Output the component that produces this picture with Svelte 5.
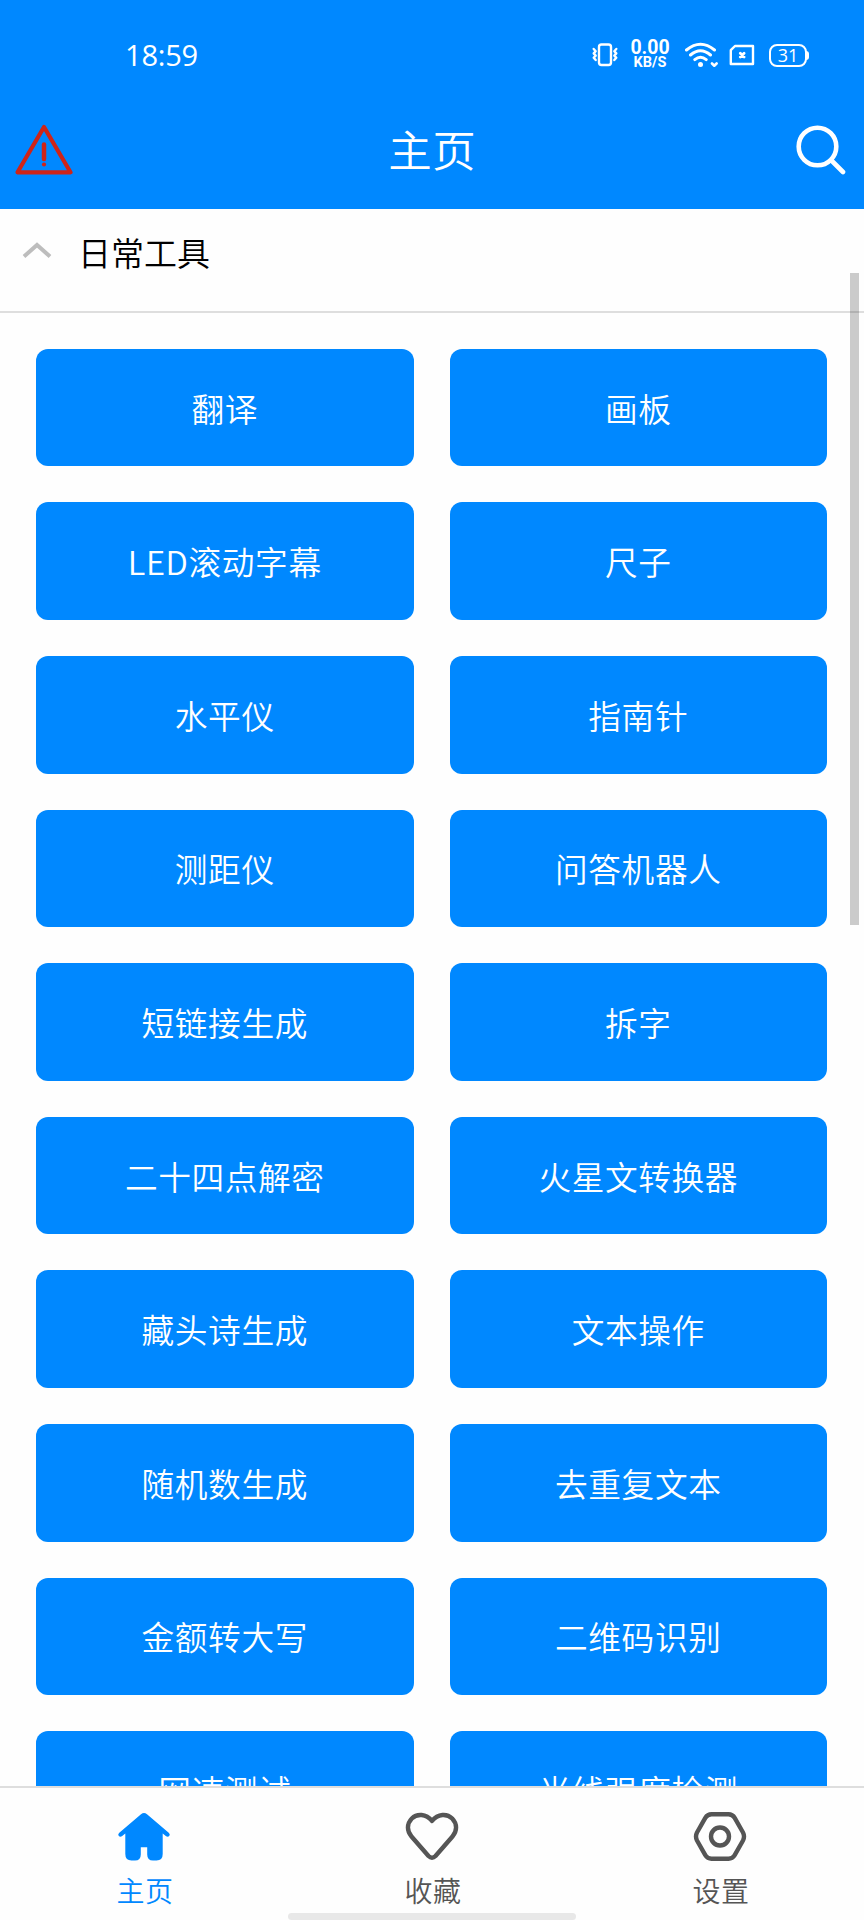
<script lang="ts">
  const tools = [
    '翻译', '画板',
    'LED滚动字幕', '尺子',
    '水平仪', '指南针',
    '测距仪', '问答机器人',
    '短链接生成', '拆字',
    '二十四点解密', '火星文转换器',
    '藏头诗生成', '文本操作',
    '随机数生成', '去重复文本',
    '金额转大写', '二维码识别',
    '网速测试', '光线强度检测',
  ];

  const tabs = [
    { id: 'home', label: '主页' },
    { id: 'favorites', label: '收藏' },
    { id: 'settings', label: '设置' },
  ];

  let open = $state(true);
  let active = $state('home');
</script>

<div class="screen">
  <header>
    <div class="status">
      <span class="time">18:59</span>
      <div class="indicators">
        <svg class="vibrate" width="26" height="24" viewBox="0 0 26 24">
          <rect x="7" y="1.500" width="12" height="20.500" rx="2.500" />
          <path d="M1.700 6l2 2.200-2 2.200 2 2.200-2 2.200 2 2.200M24.300 6l-2 2.200 2 2.200-2 2.200 2 2.200-2 2.200" />
        </svg>
        <div class="speed">
          <span>0.00</span>
          <small>KB/S</small>
        </div>
        <svg class="wifi" width="33" height="26" viewBox="0 0 33 26">
          <path d="M1.500 8Q15.500-3.500 29.500 8M5.500 13Q15.500 4.500 25.500 13M9.800 17.600Q15.500 12.800 21.200 17.600" stroke-width="3" />
          <circle cx="15.500" cy="22.500" r="2.500" fill="#fff" stroke="none" />
          <path d="M27 21.500l2.300 2.200 2.300-2.200" stroke-width="2.600" />
        </svg>
        <svg class="sim" width="26" height="22" viewBox="0 0 26 22">
          <path d="M6 2H24v18H1.800V6.200z" />
          <path d="M11.300 9.200l3.800 3.800M15.100 9.200l-3.800 3.800" stroke-width="2.800" />
        </svg>
        <div class="battery">31</div>
      </div>
    </div>
    <div class="titlebar">
      <button class="warn" aria-label="提示">
        <svg width="58" height="52" viewBox="0 0 58 52">
          <path d="M29 3L55.500 48.300H2.500z" stroke-width="4.200" />
          <path d="M29 20.500v14.500" stroke-width="4.500" />
          <circle cx="29" cy="40.500" r="2.100" fill="#cf2418" stroke="none" />
        </svg>
      </button>
      <h1>主页</h1>
      <button class="search" aria-label="搜索">
        <svg width="50" height="50" viewBox="0 0 50 50">
          <circle cx="21.500" cy="21.500" r="18.800" stroke-width="4.600" />
          <path d="M35.500 35.500L47 47" stroke-width="4.600" />
        </svg>
      </button>
    </div>
  </header>

  <main>
    <button class="group" onclick={() => (open = !open)}>
      <svg class:closed={!open} width="30" height="17" viewBox="0 0 30 17">
        <path d="M2 14.500L15 3l13 11.500" />
      </svg>
      <span>日常工具</span>
    </button>
    {#if open}
      <div class="grid">
        {#each tools as tool}
          <button class="tool">{tool}</button>
        {/each}
      </div>
    {/if}
    <div class="scrollbar"></div>
  </main>

  <nav>
    {#each tabs as tab}
      <button class="tab" class:active={active === tab.id} onclick={() => (active = tab.id)}>
        <svg width="54" height="52" viewBox="0 0 54 52">
          {#if tab.id === 'home'}
            <path class="solid" d="M24 2.200Q27 0 30 2.200L52 21Q53.600 22.800 52 24.200Q50.500 25.200 48.800 24L45.700 21.500V42Q45.700 48.500 39.500 48.500H36Q30.200 48.500 30.200 42.500V35.200H23.800V42.500Q23.800 48.500 18 48.500H14.500Q8.300 48.500 8.300 42V21.500L5.200 24Q3.500 25.200 2 24.200Q.4 22.800 2 21z" />
          {:else if tab.id === 'favorites'}
            <path d="M27 9C21 1.500 12 1.300 6.800 6.500C1.500 12 1.900 19.300 6.500 24.500L23.500 44Q27 47.600 30.500 44L47.500 24.500C52.100 19.300 52.500 12 47.200 6.500C42 1.300 33 1.500 27 9z" />
          {:else}
            <path d="M18.500 2.300H35.500Q39.500 2.300 41.700 5.900L50 20.500Q52 24.500 50 28.500L41.700 43.100Q39.500 46.700 35.500 46.700H18.500Q14.500 46.700 12.300 43.100L4 28.500Q2 24.500 4 20.500L12.300 5.900Q14.500 2.300 18.500 2.300z" />
            <circle cx="27" cy="24.500" r="9" />
          {/if}
        </svg>
        <span>{tab.label}</span>
      </button>
    {/each}
    <div class="gesture"></div>
  </nav>
</div>

<style>
  :global(body) {
    margin: 0;
  }

  .screen {
    display: flex;
    flex-direction: column;
    width: 864px;
    height: 1920px;
    overflow: hidden;
    background: #fefefe;
    font-family: 'Noto Sans CJK SC', sans-serif;
    font-weight: 350;
  }

  button {
    padding: 0;
    border: 0;
    background: none;
    color: inherit;
    font: inherit;
    cursor: pointer;
  }

  svg {
    display: block;
    fill: none;
    stroke: #fff;
    stroke-width: 2.4;
    stroke-linecap: round;
    stroke-linejoin: round;
  }

  header {
    flex: none;
    height: 209.400px;
    background: #0088ff;
    color: #fff;
  }

  .status {
    display: flex;
    justify-content: space-between;
    align-items: center;
    height: 110px;
    padding: 0 57px 0 125px;
    box-sizing: border-box;
  }

  .time {
    padding-bottom: 2px;
    font: 29px 'Open Sans', sans-serif;
    letter-spacing: -0.200px;
  }

  .indicators {
    display: flex;
    align-items: center;
  }

  .speed {
    display: flex;
    flex-direction: column;
    align-items: center;
    width: 40px;
    margin: 0 15px 0 12px;
    font: bold 19.500px/15px Roboto, sans-serif;
  }

  .speed small {
    font-size: 14.500px;
    line-height: 15px;
  }

  .sim {
    margin: 0 14px 0 11px;
  }

  .battery {
    position: relative;
    width: 38px;
    height: 23px;
    box-sizing: border-box;
    border: 2px solid #fff;
    border-radius: 8px;
    font: 18px/19px 'Open Sans', sans-serif;
    text-align: center;
  }

  .battery::after {
    content: '';
    position: absolute;
    top: 5px;
    right: -4px;
    width: 3px;
    height: 9px;
    border-radius: 0 3px 3px 0;
    background: #fff;
  }

  .titlebar {
    display: flex;
    justify-content: space-between;
    align-items: center;
    height: 79px;
    padding: 0 18px 0 14.500px;
  }

  .warn svg {
    stroke: #cf2418;
  }

  h1 {
    margin: 0;
    padding: 0 4px 3px 0;
    font-size: 43.500px;
    font-weight: 350;
    letter-spacing: 0.500px;
  }

  main {
    position: relative;
    flex: 1;
    min-height: 0;
    overflow: hidden;
  }

  .group {
    display: flex;
    align-items: center;
    width: 100%;
    height: 103.500px;
    padding: 0 0 19px 22px;
    box-sizing: border-box;
    border-bottom: 2px solid #dedede;
    gap: 26px;
    color: #000;
    font-size: 33px;
  }

  .group span {
    padding-top: 2px;
  }

  .group svg {
    stroke: #bdbdbd;
    stroke-width: 4;
    stroke-linecap: butt;
    stroke-linejoin: miter;
  }

  .group svg.closed {
    transform: rotate(180deg);
  }

  .grid {
    display: grid;
    grid-template-columns: 1fr 1fr;
    grid-auto-rows: 117.600px;
    gap: 36px;
    padding: 36px 37px 36px 36px;
  }

  .tool {
    padding-bottom: 1px;
    border-radius: 12px;
    background: #0088ff;
    color: #fff;
    font-size: 32.700px;
    letter-spacing: 0.600px;
  }

  .scrollbar {
    position: absolute;
    top: 63.600px;
    right: 5px;
    width: 9.500px;
    height: 652px;
    background: rgba(0, 0, 0, 0.2);
  }

  nav {
    position: relative;
    display: flex;
    flex: none;
    height: 134.500px;
    box-sizing: border-box;
    border-top: 2px solid #dedede;
    color: #555;
  }

  .tab {
    display: flex;
    flex: 1;
    flex-direction: column;
    align-items: center;
    padding-top: 24px;
    font-size: 28px;
    line-height: 52px;
  }

  .tab span {
    padding-left: 2px;
    letter-spacing: 0.500px;
  }

  .tab svg {
    flex: none;
    stroke: #555;
    stroke-width: 4.400;
  }

  .tab .solid {
    fill: #555;
    stroke: none;
  }

  .active {
    color: #0088ff;
  }

  .active .solid {
    fill: #0088ff;
  }

  .gesture {
    position: absolute;
    left: 288px;
    bottom: 0;
    width: 288px;
    height: 7px;
    border-radius: 4px;
    background: #e8e8e8;
  }
</style>
